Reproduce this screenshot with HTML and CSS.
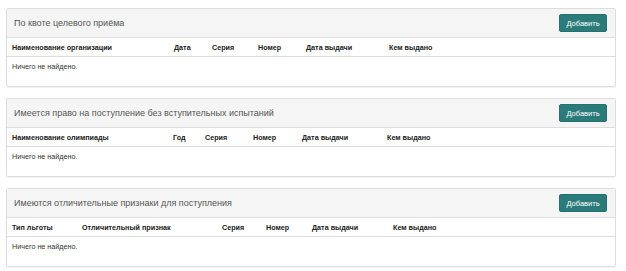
FILE: index.html
```html
<!doctype html>
<html lang="ru">
<head>
    <meta charset="UTF-8">
    <title>Документы</title>
    <link rel="stylesheet" href="styles.css">
</head>
<body>
    <div id="page">
        <div class="panel">
            <div class="panel-head">
                <span class="panel-title">По квоте целевого приёма</span>
                <button class="btn-add">Добавить</button>
            </div>
            <table class="grid">
                <thead>
                    <tr>
                        <th class="w152">Наименование организации</th>
                        <th class="w28">Дата</th>
                        <th class="w36">Серия</th>
                        <th class="w38">Номер</th>
                        <th class="w73">Дата выдачи</th>
                        <th>Кем выдано</th>
                    </tr>
                </thead>
                <tbody>
                    <tr><td colspan="6" class="empty">Ничего не найдено.</td></tr>
                </tbody>
            </table>
        </div>

        <div class="panel">
            <div class="panel-head">
                <span class="panel-title">Имеется право на поступление без вступительных испытаний</span>
                <button class="btn-add">Добавить</button>
            </div>
            <table class="grid">
                <thead>
                    <tr>
                        <th class="w151">Наименование олимпиады</th>
                        <th class="w22">Год</th>
                        <th class="w38">Серия</th>
                        <th class="w39">Номер</th>
                        <th class="w75">Дата выдачи</th>
                        <th>Кем выдано</th>
                    </tr>
                </thead>
                <tbody>
                    <tr><td colspan="6" class="empty">Ничего не найдено.</td></tr>
                </tbody>
            </table>
        </div>

        <div class="panel">
            <div class="panel-head">
                <span class="panel-title">Имеются отличительные признаки для поступления</span>
                <button class="btn-add">Добавить</button>
            </div>
            <table class="grid">
                <thead>
                    <tr>
                        <th class="w60">Тип льготы</th>
                        <th class="w130">Отличительный признак</th>
                        <th class="w34">Серия</th>
                        <th class="w36">Номер</th>
                        <th class="w71">Дата выдачи</th>
                        <th>Кем выдано</th>
                    </tr>
                </thead>
                <tbody>
                    <tr><td colspan="6" class="empty">Ничего не найдено.</td></tr>
                </tbody>
            </table>
        </div>
    </div>
</body>
</html>
```

FILE: styles.css
```css
body{
    margin: 0;
    background-color: #fff;
    font-family: "Liberation Sans", Arial, sans-serif;
    color: #333;
}
#page{
    padding: 8px 10px 0 6px;
}
.panel{
    border: 1px solid #ddd;
    border-radius: 2px;
    margin-bottom: 11px;
    height: 77px;
    box-shadow: 0 1px 1px rgba(0,0,0,.05);
}
.panel-head{
    display: flex;
    align-items: center;
    justify-content: space-between;
    height: 28px;
    padding: 0 8px 0 7px;
    background-color: #f5f5f5;
    border-bottom: 1px solid #ddd;
}
.panel-title{
    font-size: 9px;
    color: #555;
}
.btn-add{
    width: 48px;
    height: 18px;
    padding: 0;
    border: 1px solid #26706f;
    border-radius: 2px;
    background-color: #2b7b7b;
    color: #fff;
    font-family: "Liberation Sans", Arial, sans-serif;
    font-size: 7.5px;
    cursor: pointer;
}
.grid{
    width: 100%;
    border-collapse: collapse;
    table-layout: fixed;
    font-size: 7.2px;
}
.grid th{
    height: 18px;
    padding: 0 5px;
    text-align: left;
    font-weight: bold;
    color: #222;
    border-bottom: 1px solid #ddd;
}
.grid td.empty{
    padding: 5px 5px;
    color: #333;
}
.w22{ width: 22px; }
.w28{ width: 28px; }
.w34{ width: 34px; }
.w36{ width: 36px; }
.w38{ width: 38px; }
.w39{ width: 39px; }
.w60{ width: 60px; }
.w71{ width: 71px; }
.w73{ width: 73px; }
.w75{ width: 75px; }
.w130{ width: 130px; }
.w151{ width: 151px; }
.w152{ width: 152px; }
```
